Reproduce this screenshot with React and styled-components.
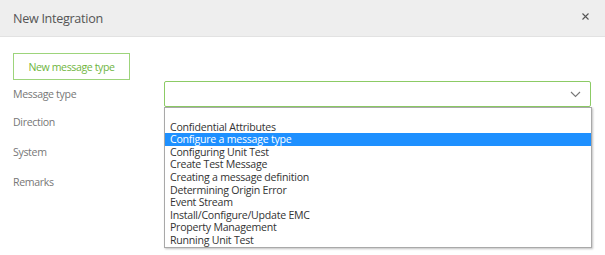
import React from 'react';
import styled, { createGlobalStyle } from 'styled-components';

const Global = createGlobalStyle`
  html, body { margin: 0; padding: 0; background: #fff; }
  body { font-family: "Open Sans", Lato, sans-serif; }
`;

const Modal = styled.div`
  width: 605px;
  height: 255px;
  background: #fff;
  overflow: hidden;
`;

const Header = styled.div`
  height: 37px;
  background: #eeeeee;
  border-bottom: 1px solid #e2e2e2;
  display: flex;
  align-items: center;
  justify-content: space-between;
  padding: 0 14px 0 13px;
  box-sizing: border-box;
`;

const Title = styled.div`
  font-size: 12.6px;
  letter-spacing: -0.3px;
  color: #555;
`;

const Close = styled.button`
  border: none;
  background: none;
  padding: 0;
  width: 12px;
  height: 12px;
  display: flex;
  align-items: center;
  justify-content: center;
  margin-top: -4px;
  cursor: pointer;
`;

const Body = styled.div`
  padding: 16px 14px 0 13px;
`;

const GhostButton = styled.button`
  width: 117px;
  height: 27px;
  border: 1px solid #9dd47b;
  background: #fff;
  color: #6fb540;
  font-family: inherit;
  font-size: 10.6px;
  letter-spacing: -0.4px;
  padding: 0;
  box-sizing: border-box;
`;

const Form = styled.div`
  display: flex;
  flex-direction: column;
`;

const Row = styled.div`
  display: grid;
  grid-template-columns: 151px 1fr;
  align-items: center;
  height: ${p => p.$h || 30}px;
  position: relative;
`;

const Label = styled.div`
  font-size: 10.6px;
  letter-spacing: -0.35px;
  color: #777;
`;

const Select = styled.div`
  height: 26px;
  border: 1px solid #8ccb65;
  border-radius: 2px;
  box-sizing: border-box;
  display: flex;
  align-items: center;
  justify-content: flex-end;
  padding-right: 9px;
  margin-top: 1px;
`;

const Options = styled.ul`
  position: absolute;
  left: 151px;
  right: -1px;
  top: 27px;
  margin: 0;
  padding: 0;
  list-style: none;
  background: #fff;
  border: 1px solid #a9a9a9;
  box-shadow: 1px 1px 2px rgba(0, 0, 0, 0.25);
  z-index: 2;
`;

const Option = styled.li`
  height: 12.6px;
  line-height: 12.6px;
  font-size: 10.6px;
  letter-spacing: -0.25px;
  padding-left: 5px;
  white-space: nowrap;
  color: ${p => (p.$active ? '#fff' : '#333')};
  background: ${p => (p.$active ? '#1e90ff' : 'transparent')};
`;

const items = [
  '',
  'Confidential Attributes',
  'Configure a message type',
  'Configuring Unit Test',
  'Create Test Message',
  'Creating a message definition',
  'Determining Origin Error',
  'Event Stream',
  'Install/Configure/Update EMC',
  'Property Management',
  'Running Unit Test',
];

export default function App() {
  return (
    <Modal>
      <Global />
      <Header>
        <Title>New Integration</Title>
        <Close aria-label="close">
          <svg width="9" height="9" viewBox="0 0 9 9">
            <path d="M1.5 1.5 L7.5 7.5 M7.5 1.5 L1.5 7.5" stroke="#555" strokeWidth="1.1" />
          </svg>
        </Close>
      </Header>
      <Body>
        <GhostButton>New message type</GhostButton>
        <Form>
          <Row $h={27}>
            <Label>Message type</Label>
            <Select>
              <svg width="11" height="7" viewBox="0 0 11 7">
                <path d="M1 1 L5.5 5.5 L10 1" stroke="#777" strokeWidth="1.1" fill="none" />
              </svg>
            </Select>
            <Options>
              {items.map((t, i) => (
                <Option key={i} $active={i === 2}>{t}</Option>
              ))}
            </Options>
          </Row>
          <Row><Label>Direction</Label></Row>
          <Row><Label>System</Label></Row>
          <Row><Label>Remarks</Label></Row>
        </Form>
      </Body>
    </Modal>
  );
}
